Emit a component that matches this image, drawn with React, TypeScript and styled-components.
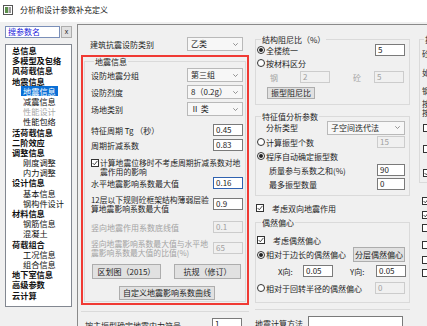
import React from 'react';
import styled, { createGlobalStyle } from 'styled-components';

const GlobalStyle = createGlobalStyle`
  html, body { margin: 0; padding: 0; overflow: hidden; background: #f0f0f0; }
  * { box-sizing: border-box; }
`;

const FONT = `"Noto Sans CJK SC", "Noto Sans", sans-serif`;

const Window = styled.div`
  width: 427px;
  height: 326px;
  overflow: hidden;
  display: flex;
  flex-direction: column;
  background: #f0f0f0;
  font-family: ${FONT};
  font-size: 8px;
  color: #1e1e1e;
`;

const TitleBar = styled.div`
  height: 22px;
  flex: none;
  background: #fff;
  display: flex;
  align-items: center;
  gap: 7px;
  padding: 0 0 2px 3px;
  color: #222;
  line-height: 10px;
`;

const Body = styled.div`
  flex: 1;
  display: flex;
  min-height: 0;
`;

const Sidebar = styled.div`
  width: 77px;
  flex: none;
  padding: 4px 5px 0 5px;
  display: flex;
  flex-direction: column;
`;

const SearchRow = styled.div`
  display: flex;
  gap: 1px;
  height: 12px;
`;

const SearchBox = styled.div`
  width: 56px;
  background: #fff;
  border: 1px solid #7a8fb8;
  color: #2222dd;
  line-height: 10px;
  padding-left: 2px;
`;

const ClearButton = styled.div`
  width: 11px;
  background: #e1e1e1;
  border: 1px solid #adadad;
  font-family: "Liberation Sans", sans-serif;
  font-size: 7px;
  line-height: 9px;
  text-align: center;
`;

const TreeList = styled.div`
  margin-top: 6px;
  height: 263px;
  background: #fff;
  border: 1px solid #828790;
  overflow: hidden;
`;

const TreeItem = styled.div<{ $level: number }>`
  height: 10.2px;
  line-height: 10.2px;
  font-size: 8.2px;
  font-weight: ${p => (p.$level === 0 ? 700 : 400)};
  padding-left: ${p => (p.$level === 0 ? 6 : 17)}px;
  white-space: nowrap;
`;

const TreeText = styled.span<{ $selected?: boolean; $disabled?: boolean }>`
  display: inline-block;
  padding: 0 ${p => (p.$selected ? 2 : 0)}px;
  margin-left: ${p => (p.$selected ? -2 : 0)}px;
  background: ${p => (p.$selected ? '#0a6fd6' : 'transparent')};
  color: ${p => (p.$selected ? '#fff' : p.$disabled ? '#a8a8a8' : '#111')};
`;

const MainPanel = styled.div`
  flex: 1;
  margin-top: 2px;
  border-top: 1px solid #8a8a8a;
  border-left: 1px solid #8a8a8a;
  display: flex;
  padding-left: 3px;
  min-width: 0;
`;

const Column = styled.div<{ $w: number; $ml?: number }>`
  width: ${p => p.$w}px;
  flex: none;
  margin-left: ${p => p.$ml ?? 0}px;
  display: flex;
  flex-direction: column;
`;

const Row = styled.div<{ $h: number; $mt?: number; $pl?: number; $pr?: number; $justify?: string }>`
  display: flex;
  align-items: center;
  justify-content: ${p => p.$justify ?? 'space-between'};
  height: ${p => p.$h}px;
  margin-top: ${p => p.$mt ?? 0}px;
  padding-left: ${p => p.$pl ?? 0}px;
  padding-right: ${p => p.$pr ?? 0}px;
  flex: none;
`;

const Label = styled.span<{ $disabled?: boolean; $ml?: number; $w?: number }>`
  color: ${p => (p.$disabled ? '#a3a3a3' : '#1e1e1e')};
  white-space: nowrap;
  line-height: 9px;
  margin-left: ${p => p.$ml ?? 0}px;
  ${p => (p.$w ? `width: ${p.$w}px; flex: none;` : '')}
`;

const Field = styled.div<{ $w?: number; $disabled?: boolean; $focus?: boolean }>`
  width: ${p => p.$w ?? 30}px;
  height: 12px;
  flex: none;
  background: ${p => (p.$disabled ? '#f0f0f0' : '#fff')};
  border: 1px solid ${p => (p.$disabled ? '#cccccc' : p.$focus ? '#2f62b0' : '#7a7a7a')};
  color: ${p => (p.$disabled ? '#a0a0a0' : '#1e1e1e')};
  line-height: 10px;
  padding-left: 2px;
  white-space: nowrap;
`;

const SelectBox = styled.div<{ $w?: number }>`
  width: ${p => p.$w ?? 56}px;
  height: 14px;
  flex: none;
  display: flex;
  align-items: center;
  justify-content: space-between;
  background: #f7f7f7;
  border: 1px solid #b9b9b9;
  padding: 0 4px 0 3px;
  line-height: 10px;
`;

const Button = styled.div<{ $w: number; $h?: number }>`
  width: ${p => p.$w}px;
  height: ${p => p.$h ?? 14}px;
  flex: none;
  display: flex;
  align-items: center;
  justify-content: center;
  background: #e1e1e1;
  border: 1px solid #adadad;
  line-height: 10px;
  white-space: nowrap;
`;

const RedBox = styled.div`
  margin-top: 4px;
  border: 2px solid #f03a34;
  padding: 0 1px 1px 1px;
`;

const Group = styled.fieldset<{ $pl?: number; $pr?: number; $pb?: number; $mt?: number }>`
  margin: ${p => p.$mt ?? 0}px 0 0 0;
  border: 1px solid #dadada;
  padding: 0 ${p => p.$pr ?? 4}px ${p => p.$pb ?? 0}px ${p => p.$pl ?? 0}px;
  min-width: 0;
`;

const Legend = styled.legend<{ $ml?: number }>`
  margin-left: ${p => p.$ml ?? 4}px;
  padding: 0 1px;
  line-height: 9px;
  white-space: nowrap;
`;

const TwoLine = styled.span<{ $disabled?: boolean }>`
  color: ${p => (p.$disabled ? '#a3a3a3' : '#1e1e1e')};
  font-size: 7.8px;
  line-height: 9px;
  white-space: nowrap;
`;

const Choice = styled.div<{ $gap?: number; $top?: boolean }>`
  display: flex;
  align-items: ${p => (p.$top ? 'flex-start' : 'center')};
  gap: ${p => p.$gap ?? 1}px;
  white-space: nowrap;
  line-height: 9px;
`;

const BoxMark = styled.span<{ $mt?: number }>`
  width: 8px;
  height: 8px;
  flex: none;
  margin-top: ${p => p.$mt ?? 0}px;
  border: 1px solid #333;
  background: #fff;
  display: flex;
  align-items: center;
  justify-content: center;
`;

const RadioMark = styled.span<{ $on?: boolean }>`
  width: 8px;
  height: 8px;
  flex: none;
  border: 1px solid #333;
  border-radius: 50%;
  background: #fff;
  display: flex;
  align-items: center;
  justify-content: center;
  &::after {
    content: '';
    width: 4px;
    height: 4px;
    border-radius: 50%;
    background: ${p => (p.$on ? '#222' : 'transparent')};
  }
`;

const BottomRow = styled.div<{ $pl?: number }>`
  margin-top: 6px;
  padding-top: 6px;
  border-top: 1px solid #dadada;
  display: flex;
  align-items: flex-start;
  padding-left: ${p => p.$pl ?? 0}px;
  height: 22px;
  & > span {
    padding-top: 3px;
  }
`;

const Chevron = () => (
  <svg width="5" height="3" viewBox="0 0 5 3">
    <path d="M0.3 0.3 L2.5 2.5 L4.7 0.3" stroke="#777" strokeWidth="0.8" fill="none" />
  </svg>
);

const Tick = () => (
  <svg width="6" height="6" viewBox="0 0 6 6">
    <path d="M0.6 3 L2.3 4.8 L5.4 0.9" stroke="#333" strokeWidth="0.9" fill="none" />
  </svg>
);

const Check: React.FC<{ checked?: boolean; label: string; gap?: number }> = ({ checked, label, gap }) => (
  <Choice $gap={gap ?? 8}>
    <BoxMark>{checked && <Tick />}</BoxMark>
    {label}
  </Choice>
);

const Radio: React.FC<{ on?: boolean; label: string }> = ({ on, label }) => (
  <Choice $gap={1}>
    <RadioMark $on={on} />
    {label}
  </Choice>
);

const Select: React.FC<{ value: string; w?: number }> = ({ value, w }) => (
  <SelectBox $w={w}>
    <span>{value}</span>
    <Chevron />
  </SelectBox>
);

const treeItems: { label: string; level: number; selected?: boolean; disabled?: boolean }[] = [
  { label: '总信息', level: 0 },
  { label: '多模型及包络', level: 0 },
  { label: '风荷载信息', level: 0 },
  { label: '地震信息', level: 0 },
  { label: '地震信息', level: 1, selected: true },
  { label: '减震信息', level: 1 },
  { label: '性能设计', level: 1, disabled: true },
  { label: '性能包络', level: 1 },
  { label: '活荷载信息', level: 0 },
  { label: '二阶效应', level: 0 },
  { label: '调整信息', level: 0 },
  { label: '刚度调整', level: 1 },
  { label: '内力调整', level: 1 },
  { label: '设计信息', level: 0 },
  { label: '基本信息', level: 1 },
  { label: '钢构件设计', level: 1 },
  { label: '材料信息', level: 0 },
  { label: '钢筋信息', level: 1 },
  { label: '混凝土', level: 1 },
  { label: '荷载组合', level: 0 },
  { label: '工况信息', level: 1 },
  { label: '组合信息', level: 1 },
  { label: '地下室信息', level: 0 },
  { label: '高级参数', level: 0 },
  { label: '云计算', level: 0 },
];

const AppIcon = () => (
  <svg width="10" height="10" viewBox="0 0 10 10">
    <rect x="0.5" y="0.5" width="9" height="9" fill="#fff" stroke="#555" />
    <rect x="2" y="2" width="3" height="6" fill="#5a8f4a" />
    <rect x="5.5" y="2" width="2.5" height="6" fill="#9a9a9a" />
  </svg>
);

const App: React.FC = () => {
  return (
    <>
      <GlobalStyle />
      <Window>
        <TitleBar>
          <AppIcon />
          <span>分析和设计参数补充定义</span>
        </TitleBar>
        <Body>
          <Sidebar>
            <SearchRow>
              <SearchBox>搜参数名</SearchBox>
              <ClearButton>x</ClearButton>
            </SearchRow>
            <TreeList>
              {treeItems.map((it, i) => (
                <TreeItem key={i} $level={it.level}>
                  <TreeText $selected={it.selected} $disabled={it.disabled}>{it.label}</TreeText>
                </TreeItem>
              ))}
            </TreeList>
          </Sidebar>

          <MainPanel>
            <Column $w={168}>
              <Row $h={14} $mt={12} $pl={9} $pr={6}>
                <Label>建筑抗震设防类别</Label>
                <Select value="乙类" />
              </Row>
              <RedBox>
                <Group $pl={6} $pr={2} $pb={1}>
                  <Legend $ml={3}>地震信息</Legend>
                  <Row $h={14} $mt={2}>
                    <Label>设防地震分组</Label>
                    <Select value="第三组" />
                  </Row>
                  <Row $h={14} $mt={3}>
                    <Label>设防烈度</Label>
                    <Select value="8（0.2g）" />
                  </Row>
                  <Row $h={14} $mt={3}>
                    <Label>场地类别</Label>
                    <Select value="Ⅱ 类" />
                  </Row>
                  <Row $h={12} $mt={8}>
                    <Label>特征周期 Tg （秒）</Label>
                    <Field>0.45</Field>
                  </Row>
                  <Row $h={12} $mt={3}>
                    <Label>周期折减系数</Label>
                    <Field>0.83</Field>
                  </Row>
                  <Row $h={18} $mt={7} $justify="flex-start">
                    <Choice $gap={1} $top>
                      <BoxMark $mt={1}>
                        <Tick />
                      </BoxMark>
                      <TwoLine>
                        计算地震位移时不考虑周期折减系数对地
                        <br />
                        震作用的影响
                      </TwoLine>
                    </Choice>
                  </Row>
                  <Row $h={12} $mt={1}>
                    <Label>水平地震影响系数最大值</Label>
                    <Field $focus>0.16</Field>
                  </Row>
                  <Row $h={18} $mt={6}>
                    <TwoLine>
                      12层以下规则砼框架结构薄弱层验
                      <br />
                      算地震影响系数最大值
                    </TwoLine>
                    <Field>0.9</Field>
                  </Row>
                  <Row $h={12} $mt={8}>
                    <Label $disabled>竖向地震作用系数底线值</Label>
                    <Field $disabled>0.1</Field>
                  </Row>
                  <Row $h={18} $mt={6}>
                    <TwoLine $disabled>
                      竖向地震影响系数最大值与水平地
                      <br />
                      震影响系数最大值的比值(%)
                    </TwoLine>
                    <Field $disabled>65</Field>
                  </Row>
                  <Row $h={15} $mt={7} $pl={1} $justify="flex-start" style={{ gap: 13 }}>
                    <Button $w={69} $h={15}>区划图（2015）</Button>
                    <Button $w={67} $h={15}>抗规（修订）</Button>
                  </Row>
                  <Row $h={14} $mt={7} $justify="center">
                    <Button $w={96}>自定义地震影响系数曲线</Button>
                  </Row>
                </Group>
              </RedBox>
              <BottomRow $pl={4}>
                <Label style={{ width: 127 }}>按主振型确定地震内力符号</Label>
                <Field>1</Field>
              </BottomRow>
            </Column>

            <Column $w={155} $ml={6}>
              <Group $pl={1} $pr={4} $pb={5} $mt={10}>
                <Legend>结构阻尼比（%）</Legend>
                <Row $h={12}>
                  <Radio on label="全楼统一" />
                  <Field>5</Field>
                </Row>
                <Row $h={12} $mt={1} $justify="flex-start">
                  <Radio label="按材料区分" />
                </Row>
                <Row $h={12} $mt={2} $justify="flex-start" $pl={13}>
                  <Label $disabled $w={30}>钢</Label>
                  <Field $disabled>2</Field>
                  <Label $disabled $w={21} $ml={23}>砼</Label>
                  <Field $disabled>5</Field>
                </Row>
                <Row $h={12} $mt={4} $justify="flex-start" $pl={10}>
                  <Button $w={48} $h={12}>振型阻尼比</Button>
                </Row>
              </Group>

              <Group $pl={1} $pr={4} $pb={5} $mt={7}>
                <Legend>特征值分析参数</Legend>
                <Row $h={13} $pl={9}>
                  <Label>分析类型</Label>
                  <Select value="子空间迭代法" w={78} />
                </Row>
                <Row $h={12} $mt={2}>
                  <Radio label="计算振型个数" />
                  <Field $disabled $w={28}>15</Field>
                </Row>
                <Row $h={12} $mt={2} $justify="flex-start">
                  <Radio on label="程序自动确定振型数" />
                </Row>
                <Row $h={12} $mt={2} $pl={12}>
                  <Label>质量参与系数之和(%)</Label>
                  <Field $w={28}>90</Field>
                </Row>
                <Row $h={12} $mt={2} $pl={12}>
                  <Label>最多振型数量</Label>
                  <Field $w={28}>0</Field>
                </Row>
              </Group>

              <Row $h={12} $mt={6} $justify="flex-start" $pl={1}>
                <Check checked label="考虑双向地震作用" />
              </Row>

              <Group $pl={1} $pr={4} $pb={8} $mt={4}>
                <Legend>偶然偏心</Legend>
                <Row $h={12} $mt={7} $justify="flex-start">
                  <Check checked label="考虑偶然偏心" />
                </Row>
                <Row $h={15} $mt={1}>
                  <Radio on label="相对于边长的偶然偏心" />
                  <Button $w={52} $h={15}>分层偶然偏心</Button>
                </Row>
                <Row $h={12} $mt={3} $justify="flex-start" $pl={21}>
                  <Label $w={25}>X向:</Label>
                  <Field>0.05</Field>
                  <Label $w={26} $ml={17}>Y向:</Label>
                  <Field>0.05</Field>
                </Row>
                <Row $h={12} $mt={5}>
                  <Radio label="相对于回转半径的偶然偏心" />
                  <Field $disabled>0</Field>
                </Row>
              </Group>
              <BottomRow>
                <Label style={{ width: 53 }}>地震计算方法</Label>
                <Field $w={95}>&nbsp;</Field>
              </BottomRow>
            </Column>

            <Column $w={150} $ml={9}>
              <Group $pl={2} $pr={4} $pb={3} $mt={10}>
                <Legend $ml={2}>按规范计算</Legend>
                <Row $h={12} $mt={3} $justify="flex-start">
                  <Label>砼矩形梁转T形</Label>
                </Row>
                <Row $h={12} $mt={7} $justify="flex-start">
                  <Label>如梁配筋计算</Label>
                </Row>
                <Row $h={12} $mt={6} $justify="flex-start">
                  <Label>钢构件截面净毛面积比</Label>
                </Row>
                <Row $h={18} $mt={3} $justify="flex-start">
                  <TwoLine>
                    按竖向构件内力
                    <br />
                    按抗规调整
                  </TwoLine>
                </Row>
                <Row $h={12} $mt={5} $justify="flex-start" $pl={1}>
                  <Check label="框架梁端配筋考虑受压钢筋" gap={4} />
                </Row>
                <Row $h={12} $mt={9} $justify="flex-start" $pl={1}>
                  <Check label="结构中的框架部分" gap={4} />
                </Row>
                <Row $h={12} $mt={12} $justify="flex-start" $pl={1}>
                  <Check checked label="考虑构件承载力" gap={4} />
                </Row>
              </Group>
              <Row $h={12} $mt={12} $justify="flex-start" $pl={3}>
                <Check checked label="剪力墙构造" gap={4} />
              </Row>
              <Row $h={12} $mt={2} $justify="flex-start" $pl={3}>
                <Check checked label="梁柱重叠部分" gap={4} />
              </Row>
              <Row $h={12} $mt={1} $justify="flex-start" $pl={3}>
                <Check label="框架柱" gap={4} />
              </Row>
              <Row $h={12} $mt={5} $justify="flex-start" $pl={3}>
                <Check label="边缘构件" gap={4} />
              </Row>
              <Row $h={12} $mt={3} $justify="flex-start" $pl={3}>
                <Check label="短肢墙" gap={4} />
              </Row>
              <Row $h={12} $mt={1} $justify="flex-start" $pl={3}>
                <Check label="梁端弯矩" gap={4} />
              </Row>
            </Column>
          </MainPanel>
        </Body>
      </Window>
    </>
  );
};

export default App;
